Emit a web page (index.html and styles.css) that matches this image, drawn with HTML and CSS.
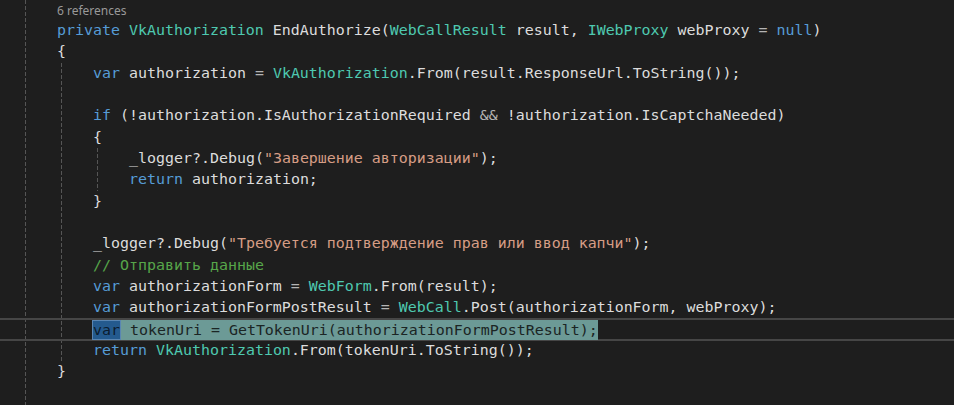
FILE: index.html
```html
<!DOCTYPE html>
<html lang="ru">
<head>
<meta charset="UTF-8">
<title>EndAuthorize</title>
<link rel="stylesheet" href="styles.css">
</head>
<body>
<div class="editor">
  <div class="guide outer">
    <div class="lens">6 references</div>
    <div class="ln"><span class="kw">private</span> <span class="ty">VkAuthorization</span> EndAuthorize(<span class="ty">WebCallResult</span> result, <span class="ty">IWebProxy</span> webProxy <span class="op">=</span> <span class="kw">null</span>)</div>
    <div class="ln">{</div>
    <div class="guide">
      <div class="ln"><span class="kw">var</span> authorization <span class="op">=</span> <span class="ty">VkAuthorization</span>.From(result.ResponseUrl.ToString());</div>
      <div class="ln"> </div>
      <div class="ln"><span class="kw">if</span> (!authorization.IsAuthorizationRequired <span class="op">&amp;&amp;</span> !authorization.IsCaptchaNeeded)</div>
      <div class="ln">{</div>
      <div class="guide">
        <div class="ln">_logger?.Debug(<span class="str">"Завершение авторизации"</span>);</div>
        <div class="ln"><span class="kw">return</span> authorization;</div>
      </div>
      <div class="ln">}</div>
      <div class="ln"> </div>
      <div class="ln">_logger?.Debug(<span class="str">"Требуется подтверждение прав или ввод капчи"</span>);</div>
      <div class="ln"><span class="cm">// Отправить данные</span></div>
      <div class="ln"><span class="kw">var</span> authorizationForm <span class="op">=</span> <span class="ty">WebForm</span>.From(result);</div>
      <div class="ln"><span class="kw">var</span> authorizationFormPostResult <span class="op">=</span> <span class="ty">WebCall</span>.Post(authorizationForm, webProxy);</div>
      <div class="ln current"><span class="sel"><span class="ref">var</span> tokenUri = GetTokenUri(authorizationFormPostResult);</span></div>
      <div class="ln"><span class="kw">return</span> <span class="ty">VkAuthorization</span>.From(tokenUri.ToString());</div>
    </div>
    <div class="ln">}</div>
  </div>
</div>
</body>
</html>
```

FILE: styles.css
```css
html, body { margin: 0; padding: 0; background: #1e1e1e; overflow: hidden; }
.editor { height: 405px; font-family: "DejaVu Sans Mono", "Liberation Mono", monospace; font-size: 14.95px; color: #dcdcdc; }
.guide { margin-left: 4px; padding-left: 32px; background: linear-gradient(to bottom, #555555 4px, transparent 4px) 0 0 / 1px 6px repeat-y; }
.outer { margin-left: 25px; height: 405px; }
.lens { height: 20px; line-height: 22px; font-family: "Noto Sans", "Open Sans", sans-serif; font-size: 12px; color: #999999; }
.ln { height: 21.33px; line-height: 21.33px; white-space: pre; }
.kw { color: #569cd6; }
.ty { color: #4ec9b0; }
.str { color: #d69d85; }
.cm { color: #57a64a; }
.op { color: #b4b4b4; }
.current { position: relative; }
.current::before { content: ""; position: absolute; left: -93px; right: 0; top: -1px; bottom: -1px; border-top: 2px solid #464646; border-bottom: 2px solid #464646; }
.sel { position: relative; display: inline-block; height: 20px; line-height: 20px; vertical-align: top; margin-top: 1px; background: #6c9a96; color: #1b2524; }
.ref { display: inline-block; height: 18px; line-height: 18px; background: #245a8e; color: #0b1c2e; border: 1px solid #5a86b3; margin-left: -1px; }
```
